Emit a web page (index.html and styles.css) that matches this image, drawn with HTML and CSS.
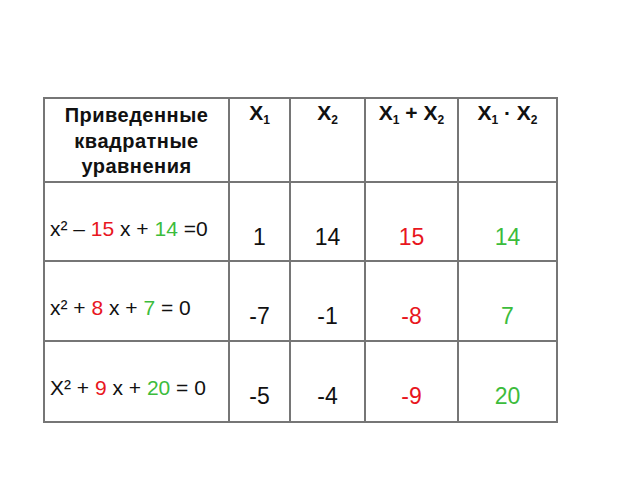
FILE: index.html
```html
<!DOCTYPE html>
<html lang="ru">
<head>
<meta charset="utf-8">
<link rel="stylesheet" href="styles.css">
</head>
<body>
<div class="table">
  <div class="cell head title">Приведенные<br>квадратные<br>уравнения</div>
  <div class="cell head">X<sub class="ix">1</sub></div>
  <div class="cell head">X<sub class="ix">2</sub></div>
  <div class="cell head">X<sub class="ix">1</sub> + X<sub class="ix">2</sub></div>
  <div class="cell head">X<sub class="ix">1</sub> · X<sub class="ix">2</sub></div>

  <div class="cell eq">x² – <span class="red">15</span> x + <span class="green">14</span> =0</div>
  <div class="cell num">1</div>
  <div class="cell num">14</div>
  <div class="cell num red">15</div>
  <div class="cell num green">14</div>

  <div class="cell eq">x² + <span class="red">8</span> x + <span class="green">7</span> = 0</div>
  <div class="cell num">-7</div>
  <div class="cell num">-1</div>
  <div class="cell num red">-8</div>
  <div class="cell num green">7</div>

  <div class="cell eq">X² + <span class="red">9</span> x + <span class="green">20</span> = 0</div>
  <div class="cell num">-5</div>
  <div class="cell num">-4</div>
  <div class="cell num red">-9</div>
  <div class="cell num green">20</div>
</div>
</body>
</html>
```
FILE: styles.css
```css
html, body {
  margin: 0;
  padding: 0;
  background: #ffffff;
}
body {
  font-family: "Liberation Sans", Arial, sans-serif;
  color: #111111;
}
.table {
  margin: 97px 0 0 43px;
  width: 515px;
  box-sizing: border-box;
  display: grid;
  grid-template-columns: 183px 59px 73px 91px 97px;
  grid-template-rows: 82px 77px 78px 79px;
  gap: 2px;
  padding: 2px;
  background: #767676;
}
.cell {
  background: #ffffff;
  box-sizing: border-box;
}
.head {
  font-weight: bold;
  font-size: 21px;
  line-height: 26px;
  text-align: center;
  padding-top: 1px;
  white-space: nowrap;
}
.title {
  font-size: 20px;
  line-height: 25.5px;
  letter-spacing: 0.5px;
  padding-top: 4px;
}
.ix {
  font-size: 12px;
  vertical-align: -4px;
  line-height: 0;
}
.eq {
  font-size: 21px;
  line-height: 26px;
  padding: 33px 0 0 5px;
  white-space: nowrap;
}
.num {
  font-size: 23px;
  line-height: 28px;
  text-align: center;
  padding-top: 40px;
}
.red { color: #e8161e; }
.green { color: #3cbc3c; }
```
